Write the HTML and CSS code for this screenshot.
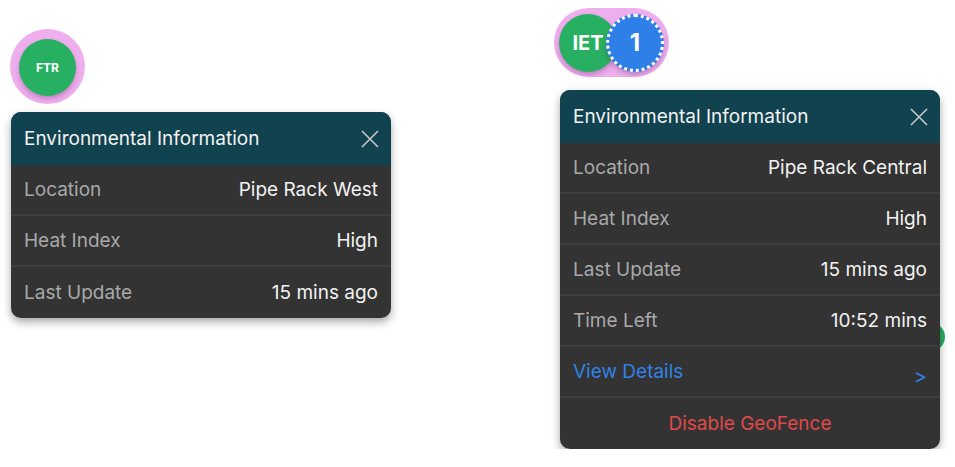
FILE: index.html
```html
<!DOCTYPE html>
<html lang="en">
<head>
    <meta charset="UTF-8">
    <meta name="viewport" content="width=device-width, initial-scale=1.0">
    <title>Environmental Information</title>
    <link rel="stylesheet" href="styles.css">
</head>
<body>
    <div class="map">
        <div class="group group-left">
            <div class="halo halo-single">
                <div class="pin pin-green pin-small">FTR</div>
            </div>
            <div class="card">
                <div class="card-header">
                    <span>Environmental Information</span>
                    <svg class="close" width="18" height="18" viewBox="0 0 18 18"><path d="M1 1L17 17M17 1L1 17" stroke="#c8c8c8" stroke-width="1.6" fill="none"/></svg>
                </div>
                <div class="row"><span class="label">Location</span><span class="value">Pipe Rack West</span></div>
                <div class="row"><span class="label">Heat Index</span><span class="value">High</span></div>
                <div class="row"><span class="label">Last Update</span><span class="value">15 mins ago</span></div>
            </div>
        </div>

        <div class="group group-right">
            <div class="halo halo-pair">
                <div class="pin pin-green">IET</div>
                <div class="pin pin-blue">1</div>
            </div>
            <div class="marker"></div>
            <div class="card">
                <div class="card-header">
                    <span>Environmental Information</span>
                    <svg class="close" width="18" height="18" viewBox="0 0 18 18"><path d="M1 1L17 17M17 1L1 17" stroke="#c8c8c8" stroke-width="1.6" fill="none"/></svg>
                </div>
                <div class="row"><span class="label">Location</span><span class="value">Pipe Rack Central</span></div>
                <div class="row"><span class="label">Heat Index</span><span class="value">High</span></div>
                <div class="row"><span class="label">Last Update</span><span class="value">15 mins ago</span></div>
                <div class="row"><span class="label">Time Left</span><span class="value">10:52 mins</span></div>
                <div class="row"><span class="link">View Details</span><span class="chevron">&gt;</span></div>
                <div class="row row-center"><span class="danger">Disable GeoFence</span></div>
            </div>
        </div>
    </div>
</body>
</html>
```

FILE: styles.css
```css
body {
    margin: 0;
    background-color: #ffffff;
    font-family: 'Inter', 'Liberation Sans', sans-serif;
}
.map {
    display: flex;
    align-items: flex-start;
}
.group {
    width: 380px;
    display: flex;
    flex-direction: column;
}
.group-left {
    margin-left: 11px;
    padding-top: 29px;
}
.group-right {
    margin-left: 169px;
    padding-top: 8px;
    position: relative;
}

/* pins */
.halo {
    background-color: #efaeee;
    display: flex;
    align-items: center;
}
.halo-single {
    width: 75px;
    height: 75px;
    border-radius: 50%;
    justify-content: center;
    margin-left: -1px;
}
.halo-pair {
    align-self: flex-start;
    height: 69px;
    padding: 0 5px;
    border-radius: 35px;
    margin-left: -6px;
}
.pin {
    width: 58px;
    height: 58px;
    border-radius: 50%;
    display: flex;
    align-items: center;
    justify-content: center;
    color: #fff;
    font-weight: 700;
    font-size: 20px;
    box-shadow: 0 3px 5px rgba(90, 30, 90, 0.3);
    box-sizing: border-box;
}
.pin-small {
    width: 57px;
    height: 57px;
    font-size: 12px;
    margin-top: 2px;
}
.pin-green {
    background-color: #28b062;
}
.pin-blue {
    background-color: #2f7fe9;
    border: 3px dotted #ffffff;
    margin-left: -11px;
    font-size: 24px;
}

/* card */
.card {
    position: relative;
    z-index: 1;
    background-color: #333333;
    border-radius: 10px;
    overflow: hidden;
    box-shadow: 0 4px 8px rgba(0, 0, 0, 0.35);
    font-size: 19px;
}
.group-left .card {
    margin-top: 8px;
}
.group-right .card {
    margin-top: 13px;
}
.card-header {
    background-color: #10424f;
    height: 53px;
    padding: 0 13px;
    display: flex;
    align-items: center;
    justify-content: space-between;
    color: #f2f2f2;
}
.close {
    margin-right: -1px;
}
.row {
    height: 49px;
    padding: 0 13px;
    display: flex;
    align-items: center;
    justify-content: space-between;
    border-bottom: 2px solid #3e3e3e;
}
.row:last-child {
    border-bottom: none;
    height: 51px;
}
.label {
    color: #a9a9a9;
}
.value {
    color: #f2f2f2;
}
.link {
    color: #3182e6;
}
.chevron {
    color: #3182e6;
    font-size: 20px;
    margin-top: 8px;
    margin-right: 0;
}
.row-center {
    justify-content: center;
}
.danger {
    color: #e0484b;
}

/* map marker peeking from behind the card */
.marker {
    position: absolute;
    top: 323px;
    right: -5px;
    width: 28px;
    height: 28px;
    border-radius: 50%;
    background-color: #28b062;
}
```
